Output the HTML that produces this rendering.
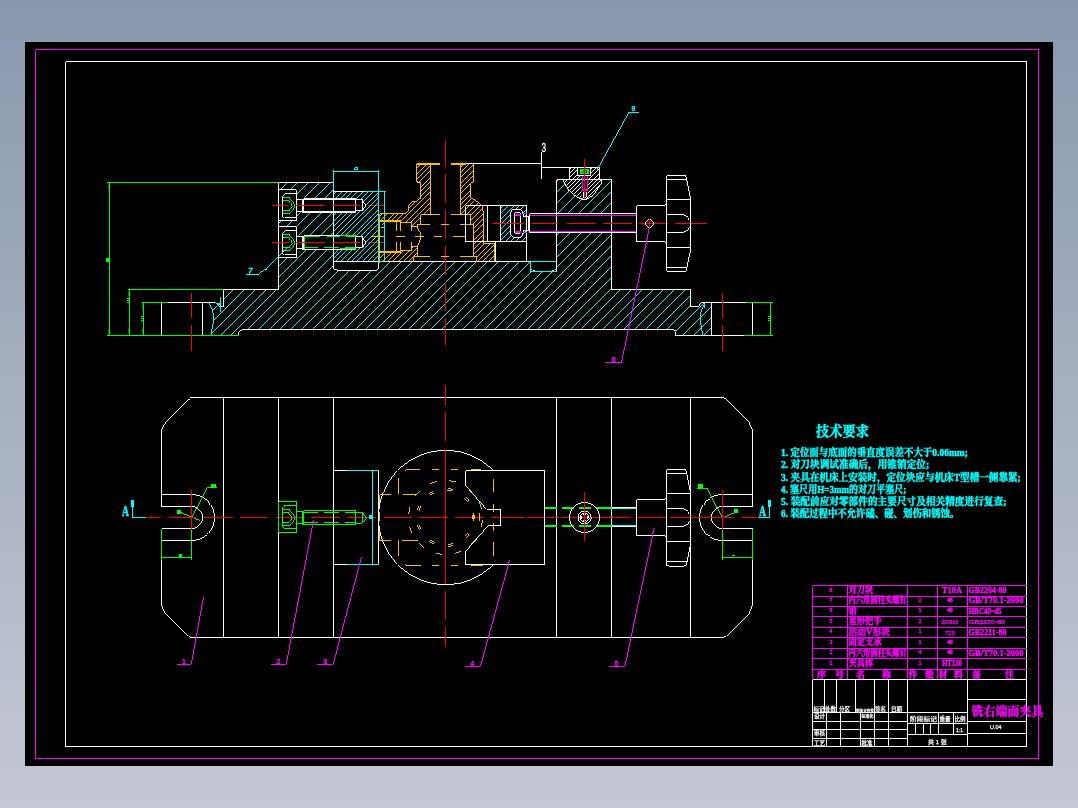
<!DOCTYPE html>
<html lang="zh"><head><meta charset="utf-8"><title>铣右端面夹具</title>
<style>
html,body{margin:0;padding:0}
body{width:1078px;height:808px;overflow:hidden;background:linear-gradient(180deg,#8998ae 0%,#c4c8d3 100%);}
svg{display:block;position:absolute;left:0;top:0;will-change:transform}
</style></head><body>
<svg width="1078" height="808" viewBox="0 0 1078 808" fill="none" stroke-width="0.99" shape-rendering="crispEdges">
<defs><clipPath id="h1"><path d="M278.5 182.5L333.5 182.5L333.5 266.5L334.5 269L337.5 270.5L374.5 270.5L377.5 269L378.5 266.5L378.5 261.5L530.5 261.5L530.5 271.5L556.5 271.5L556.5 179.5L611.5 179.5L611.5 289.5L690.5 289.5L690.5 306.5L697.5 306.5L700.5 302.5L711.5 302.5L711.5 335.5L675.5 335.5L675.5 331.5L672.5 329.5L241.5 329.5L238.5 331.5L238.5 335.5L211 335.5L212.8 325.8L213.9 318L212.3 310.7L209.5 302.5L214.5 302.5L218.5 306.5L223.5 306.5L223.5 289.5L278.5 289.5ZM278.5 189.5L296.5 189.5L296.5 198.5L333.5 198.5L333.5 212.5L296.5 212.5L296.5 220.5L278.5 220.5ZM278.5 226.5L296.5 226.5L296.5 235.5L333.5 235.5L333.5 249.5L296.5 249.5L296.5 257.5L278.5 257.5ZM563 179.5L569.6 190.7L576 196.5L584.5 199.6L592 197L597.8 188.3L601.4 183L601.4 179.5ZM556.5 213.5L611.5 213.5L611.5 232.5L556.5 232.5Z" clip-rule="evenodd"/></clipPath><clipPath id="h2"><path d="M333.5 191.5L378.5 191.5L378.5 261.5L333.5 261.5ZM333.5 198.5L355.5 198.5L355.5 200L362.5 200L366 205.5L362.5 211L355.5 211L355.5 212.5L333.5 212.5ZM333.5 235.5L355.5 235.5L355.5 237L362.5 237L366 242.5L362.5 248L355.5 248L355.5 249.5L333.5 249.5Z" clip-rule="evenodd"/></clipPath><clipPath id="h3"><path d="M430.5 163.5L418.5 163.5L416.5 165.5L416.5 180L418.5 182.5L420.5 182.5L420.5 198L416 201.5L412 201L409.5 203.5L408.5 207.5L408.5 210L405.5 213.5L379.5 213.5L379.5 221L400.5 221L400.5 222.5L411.5 222.5L411.5 226.5L417.5 226.5L417.5 224.5L420.5 224.5L420.5 214.5L430.5 214.5Z" clip-rule="evenodd"/></clipPath><clipPath id="h4"><path d="M379.5 252L400.5 252L400.5 250.5L411.5 250.5L411.5 246.5L417.5 246.5L417.5 256.5L413.5 256.5L413.5 261.5L379.5 261.5Z" clip-rule="evenodd"/></clipPath><clipPath id="h5"><path d="M460.5 163.5L471.5 163.5L473.5 165.5L473.5 180L471.5 182.5L470.5 182.5L470.5 198L479.5 203.7L482 206L483 210.5L483 243L494.5 243L494.5 261.5L476.5 261.5L476.5 256.5L473.5 256.5L473.5 224.5L470.5 224.5L470.5 214.5L460.5 214.5Z" clip-rule="evenodd"/></clipPath><clipPath id="h6"><path d="M500.5 205.5L526.5 205.5L526.5 241.5L500.5 241.5ZM510.5 214L512 210.5L515.5 209L518 209L521.5 210.5L523 214L523 216.5L526.5 216.5L526.5 230.5L523 230.5L523 233L521.5 236L518 237.5L515.5 237.5L512 236L510.5 233Z" clip-rule="evenodd"/></clipPath><clipPath id="h7"><path d="M569.5 167.5L599.5 167.5L599.5 179.5L601.4 179.5L601.4 183L597.8 188.3L592 197L584.5 199.6L576 196.5L569.6 190.7L563 179.5L569.5 179.5ZM577.5 167.5L590.5 167.5L590.5 175.5L587.5 175.5L587.5 196L581.5 196L581.5 175.5L577.5 175.5Z" clip-rule="evenodd"/></clipPath></defs>
<rect x="25" y="42" width="1028" height="724" style="fill:#000;stroke:none"/>
<path d="M35.5 49.5H1038.5V758.5H35.5Z" stroke="#f0f" fill="none"/>
<path d="M65.5 61.5H1026.5V746.5H65.5Z" stroke="#fff" fill="none"/>
<path d="M208.5 185.95L712.5 -318.05M208.5 196.7L712.5 -307.3M208.5 207.45L712.5 -296.55M208.5 218.2L712.5 -285.8M208.5 228.95L712.5 -275.05M208.5 239.7L712.5 -264.3M208.5 250.45L712.5 -253.55M208.5 261.2L712.5 -242.8M208.5 271.95L712.5 -232.05M208.5 282.7L712.5 -221.3M208.5 293.45L712.5 -210.55M208.5 304.2L712.5 -199.8M208.5 314.95L712.5 -189.05M208.5 325.7L712.5 -178.3M208.5 336.45L712.5 -167.55M208.5 347.2L712.5 -156.8M208.5 357.95L712.5 -146.05M208.5 368.7L712.5 -135.3M208.5 379.45L712.5 -124.55M208.5 390.2L712.5 -113.8M208.5 400.95L712.5 -103.05M208.5 411.7L712.5 -92.3M208.5 422.45L712.5 -81.55M208.5 433.2L712.5 -70.8M208.5 443.95L712.5 -60.05M208.5 454.7L712.5 -49.3M208.5 465.45L712.5 -38.55M208.5 476.2L712.5 -27.8M208.5 486.95L712.5 -17.05M208.5 497.7L712.5 -6.3M208.5 508.45L712.5 4.45M208.5 519.2L712.5 15.2M208.5 529.95L712.5 25.95M208.5 540.7L712.5 36.7M208.5 551.45L712.5 47.45M208.5 562.2L712.5 58.2M208.5 572.95L712.5 68.95M208.5 583.7L712.5 79.7M208.5 594.45L712.5 90.45M208.5 605.2L712.5 101.2M208.5 615.95L712.5 111.95M208.5 626.7L712.5 122.7M208.5 637.45L712.5 133.45M208.5 648.2L712.5 144.2M208.5 658.95L712.5 154.95M208.5 669.7L712.5 165.7M208.5 680.45L712.5 176.45M208.5 691.2L712.5 187.2M208.5 701.95L712.5 197.95M208.5 712.7L712.5 208.7M208.5 723.45L712.5 219.45M208.5 734.2L712.5 230.2M208.5 744.95L712.5 240.95M208.5 755.7L712.5 251.7M208.5 766.45L712.5 262.45M208.5 777.2L712.5 273.2M208.5 787.95L712.5 283.95M208.5 798.7L712.5 294.7M208.5 809.45L712.5 305.45M208.5 820.2L712.5 316.2M208.5 830.95L712.5 326.95" stroke="#0ff" stroke-width="0.99" clip-path="url(#h1)"/>
<path d="M278.5 289.5L278.5 182.5L333.5 182.5L333.5 266.5" stroke="#fff" fill="none"/>
<path d="M333.5 266.5Q333.5 270.5 337.5 270.5H374.5Q378.5 270.5 378.5 266.5V261.5" stroke="#fff" fill="none"/>
<path d="M333.5 261.5L530.5 261.5" stroke="#fff"/>
<path d="M530.5 261.5L530.5 271.5L556.5 271.5L556.5 261.5" stroke="#0ff" fill="none"/>
<path d="M530.5 261.5L556.5 261.5" stroke="#0ff"/>
<path d="M531.5 268.5Q532 270.5 535 270.5M552 270.5Q555 270.5 555.5 268.5" stroke="#fff" fill="none"/>
<path d="M556.5 271.5L556.5 179.5L611.5 179.5L611.5 289.5L690.5 289.5L690.5 306.5L697.5 306.5L700.5 302.5L746 302.5" stroke="#fff" fill="none"/>
<path d="M711.5 302.5L711.5 335.5" stroke="#fff" fill="none"/>
<path d="M752.5 302.5L752.5 335.5" stroke="#fff" fill="none"/>
<path d="M744 335.5L675.5 335.5L675.5 331.5L672.5 329.5L241.5 329.5L238.5 331.5L238.5 335.5" stroke="#fff" fill="none"/>
<path d="M278.5 289.5L223.5 289.5L223.5 306.5L218.5 306.5" stroke="#fff" fill="none"/>
<path d="M167.5 302.5L214.5 302.5" stroke="#fff"/>
<path d="M161.5 302.5L161.5 335.5" stroke="#fff"/>
<path d="M202.5 302.5L202.5 335.5" stroke="#fff"/>
<path d="M209.5 302.5Q212 308 213 313T213.5 321T211 335" stroke="#0ff" fill="none"/>
<path d="M214.5 302.5L218.5 306" stroke="#0ff" fill="none"/>
<path d="M220.5 296.5L220.5 312" stroke="#0ff"/>
<path d="M217 303.5h3M217.5 304.5h2.5" stroke="#0ff" fill="none"/>
<path d="M704.5 302.5Q700 310 700.3 318T703 335.5" stroke="#0ff" fill="none"/>
<path d="M704.5 302.5L704.5 308" stroke="#0ff"/>
<path d="M107 182.5L278.5 182.5" stroke="#0f0"/>
<path d="M109.5 182.5L109.5 335.5" stroke="#0f0"/>
<path d="M107 335.5L238.5 335.5" stroke="#0f0"/>
<rect x="106" y="258" width="4" height="4" style="fill:#0f0;stroke:none"/>
<path d="M128 289.5L223.5 289.5" stroke="#0f0"/>
<path d="M129.5 289.5L129.5 335.5" stroke="#0f0"/>
<path d="M141.5 302.5L167.5 302.5" stroke="#0f0"/>
<path d="M143.5 302.5L143.5 335.5" stroke="#0f0"/>
<path d="M126.5 298.5h2.5M127 300.5h3M126.5 302.5h3" stroke="#0f0" fill="none"/>
<path d="M140.5 316.5h2.5M141 318.5h3M140.5 320.5h3" stroke="#0f0" fill="none"/>
<path d="M108.5 184.5v4M108.5 329.5v4M128.5 291.5v4M128.5 329v4M142.5 304.5v4M142.5 329v4" stroke="#070" fill="none"/>
<path d="M746 302.5L772.5 302.5" stroke="#0f0"/>
<path d="M744 335.5L772.5 335.5" stroke="#0f0"/>
<path d="M770.5 302.5L770.5 335.5" stroke="#0f0"/>
<path d="M767.5 316.5h2.5M768 318.5h3M767.5 320.5h3" stroke="#0f0" fill="none"/>
<path d="M191.5 293L191.5 318" stroke="#f00"/>
<path d="M191.5 325L191.5 350.5" stroke="#f00"/>
<path d="M722.5 293L722.5 317.6" stroke="#f00"/>
<path d="M722.5 325L722.5 351" stroke="#f00"/>
<path d="M445.5 140L445.5 166.8" stroke="#f00"/>
<path d="M445.5 174.3L445.5 203" stroke="#f00"/>
<path d="M445.5 210L445.5 238.3" stroke="#f00"/>
<path d="M445.5 246L445.5 274.5" stroke="#f00"/>
<path d="M445.5 281.5L445.5 309.5" stroke="#f00"/>
<path d="M445.5 318L445.5 344.6" stroke="#f00"/>
<path d="M278.5 189.5H294.5Q296.5 189.5 296.5 191.5V220.5H278.5" stroke="#fff" fill="none"/>
<path d="M296.5 193.5H284.5L282.5 195.5V215.5L284.5 217.5H296.5" stroke="#fff" fill="none"/>
<path d="M282.5 197.5H289.5Q293 200.5 294.5 205.5Q293 210.5 289.5 213.5H282.5" stroke="#0f0" fill="none"/>
<path d="M282.5 200.5H289Q291 202.5 292 205.5Q291 208.5 289 210.5H282.5" stroke="#0f0" fill="none"/>
<path d="M296.5 199.5H302.5M296.5 211.5H302.5M302.5 198.5V212.5" stroke="#fff" fill="none"/>
<path d="M303.5 198.5H355.5V212.5H303.5Z" stroke="#fff" fill="none"/>
<path d="M303.5 199.5H355.5M303.5 211.5H355.5" stroke="#fff" fill="none"/>
<path d="M355.5 199.5H362.5L366 205.0L362.5 210.5H355.5" stroke="#fff" fill="none"/>
<path d="M362.5 199.5L362.5 210.5" stroke="#fff"/>
<path d="M272 205.5L288.6 205.5" stroke="#f00"/>
<path d="M296 205.5L324.8 205.5" stroke="#f00"/>
<path d="M332 205.5L360 205.5" stroke="#f00"/>
<path d="M368.3 205.5L384 205.5" stroke="#f00"/>
<path d="M278.5 226.5H294.5Q296.5 226.5 296.5 228.5V257.5H278.5" stroke="#fff" fill="none"/>
<path d="M296.5 230.5H284.5L282.5 232.5V252.5L284.5 254.5H296.5" stroke="#fff" fill="none"/>
<path d="M282.5 234.5H289.5Q293 237.5 294.5 242.5Q293 247.5 289.5 250.5H282.5" stroke="#0f0" fill="none"/>
<path d="M282.5 237.5H289Q291 239.5 292 242.5Q291 245.5 289 247.5H282.5" stroke="#0f0" fill="none"/>
<path d="M296.5 236.5H302.5M296.5 248.5H302.5M302.5 235.5V249.5" stroke="#fff" fill="none"/>
<path d="M303.5 235.5H355.5V249.5H303.5Z" stroke="#fff" fill="none"/>
<path d="M303.5 236.5H320M327 236.5H340M346 236.5H355.5M303.5 247.5H318M324 247.5H339M345 247.5H355.5" stroke="#0f0" fill="none"/>
<path d="M340 235.5H355.5M340 248.5H355.5" stroke="#0f0" fill="none"/>
<path d="M304.5 236.5L304.5 248.5" stroke="#0f0"/>
<path d="M355.5 236.5H362.5L366 242.0L362.5 247.5H355.5" stroke="#fff" fill="none"/>
<path d="M362.5 236.5L362.5 247.5" stroke="#fff"/>
<path d="M272 242.5L288.6 242.5" stroke="#f00"/>
<path d="M296 242.5L324.8 242.5" stroke="#f00"/>
<path d="M332 242.5L360 242.5" stroke="#f00"/>
<path d="M368.3 242.5L384 242.5" stroke="#f00"/>
<path d="M332.5 195.7L379.5 148.7M332.5 201L379.5 154M332.5 206.3L379.5 159.3M332.5 211.6L379.5 164.6M332.5 216.9L379.5 169.9M332.5 222.2L379.5 175.2M332.5 227.5L379.5 180.5M332.5 232.8L379.5 185.8M332.5 238.1L379.5 191.1M332.5 243.4L379.5 196.4M332.5 248.7L379.5 201.7M332.5 254L379.5 207M332.5 259.3L379.5 212.3M332.5 264.6L379.5 217.6M332.5 269.9L379.5 222.9M332.5 275.2L379.5 228.2M332.5 280.5L379.5 233.5M332.5 285.8L379.5 238.8M332.5 291.1L379.5 244.1M332.5 296.4L379.5 249.4M332.5 301.7L379.5 254.7M332.5 307L379.5 260" stroke="#0ff" stroke-width="0.99" clip-path="url(#h2)"/>
<path d="M333.5 191.5L365 191.5" stroke="#fff"/>
<path d="M378.5 191.5L378.5 261.5" stroke="#fff"/>
<path d="M333.5 170L333.5 190" stroke="#0ff"/>
<path d="M378.5 170L378.5 261.5" stroke="#0ff"/>
<path d="M333.5 171.5L378.5 171.5" stroke="#0ff"/>
<path d="M354.5 167.5h3v2h-3zM336.5 171.5h3M372.5 171.5h3" stroke="#0ff" fill="none"/>
<path d="M365 191.5L385.5 191.5" stroke="#0ff"/>
<path d="M378.5 261.5L385.5 261.5" stroke="#0ff"/>
<path d="M384.5 191.5L384.5 261.5" stroke="#0ff"/>
<path d="M381.5 224.5q2 -2 3 0t-1 3q-2 1 -2 -1" stroke="#0ff" fill="none"/>
<path d="M378.5 169.7L431.5 116.7M378.5 175L431.5 122M378.5 180.3L431.5 127.3M378.5 185.6L431.5 132.6M378.5 190.9L431.5 137.9M378.5 196.2L431.5 143.2M378.5 201.5L431.5 148.5M378.5 206.8L431.5 153.8M378.5 212.1L431.5 159.1M378.5 217.4L431.5 164.4M378.5 222.7L431.5 169.7M378.5 228L431.5 175M378.5 233.3L431.5 180.3M378.5 238.6L431.5 185.6M378.5 243.9L431.5 190.9M378.5 249.2L431.5 196.2M378.5 254.5L431.5 201.5M378.5 259.8L431.5 206.8M378.5 265.1L431.5 212.1M378.5 270.4L431.5 217.4M378.5 275.7L431.5 222.7" stroke="#ffbf00" stroke-width="0.99" clip-path="url(#h3)"/>
<path d="M378.5 249.2L418.5 209.2M378.5 254.5L418.5 214.5M378.5 259.8L418.5 219.8M378.5 265.1L418.5 225.1M378.5 270.4L418.5 230.4M378.5 275.7L418.5 235.7M378.5 281L418.5 241M378.5 286.3L418.5 246.3M378.5 291.6L418.5 251.6M378.5 296.9L418.5 256.9" stroke="#ffbf00" stroke-width="0.99" clip-path="url(#h4)"/>
<path d="M459.5 168.2L495.5 132.2M459.5 173.5L495.5 137.5M459.5 178.8L495.5 142.8M459.5 184.1L495.5 148.1M459.5 189.4L495.5 153.4M459.5 194.7L495.5 158.7M459.5 200L495.5 164M459.5 205.3L495.5 169.3M459.5 210.6L495.5 174.6M459.5 215.9L495.5 179.9M459.5 221.2L495.5 185.2M459.5 226.5L495.5 190.5M459.5 231.8L495.5 195.8M459.5 237.1L495.5 201.1M459.5 242.4L495.5 206.4M459.5 247.7L495.5 211.7M459.5 253L495.5 217M459.5 258.3L495.5 222.3M459.5 263.6L495.5 227.6M459.5 268.9L495.5 232.9M459.5 274.2L495.5 238.2M459.5 279.5L495.5 243.5M459.5 284.8L495.5 248.8M459.5 290.1L495.5 254.1M459.5 295.4L495.5 259.4" stroke="#ffbf00" stroke-width="0.99" clip-path="url(#h5)"/>
<path d="M440 163.5H418.5Q416.5 163.5 416.5 165.5V180Q416.5 182.5 419 182.5H420.5V198L416 201.5Q412 200.5 409.5 203.5T408.5 207.5V210L405.5 213.5H379.5" stroke="#ffbf00" fill="none"/>
<path d="M416.5 164L440 164" stroke="#ffbf00" stroke-width="2"/>
<path d="M451 164L466 164" stroke="#ffbf00" stroke-width="2"/>
<path d="M430.5 163.5L430.5 214.5" stroke="#ffbf00"/>
<path d="M460.5 163.5L460.5 214.5" stroke="#ffbf00"/>
<path d="M466 163.5H471.5Q473.5 163.5 473.5 165.5V180Q473.5 182.5 471 182.5H470.5V198L479.5 203.7Q483 206 483 210.5V243H494.5" stroke="#ffbf00" fill="none"/>
<path d="M417 182.5L420.5 182.5" stroke="#ffbf00"/>
<path d="M470.5 182.5L473 182.5" stroke="#ffbf00"/>
<path d="M420.5 214.5H440M451 214.5H470.5M420.5 214.5V224.5M470.5 214.5V224.5" stroke="#ffbf00" fill="none"/>
<path d="M416.5 224.5H430M441 224.5H449M460 224.5H473.5" stroke="#ffbf00" fill="none"/>
<path d="M473.5 224.5V256.5M417.5 224.5V227.5M417.5 246.5V256.5" stroke="#ffbf00" fill="none"/>
<path d="M417.5 227.5Q421 232 420.5 236.5T417.5 246.5" stroke="#ffbf00" fill="none"/>
<path d="M413.5 256.5H430M441 256.5H449M460 256.5H476.5M413.5 256.5V261.5M476.5 256.5V261.5" stroke="#ffbf00" fill="none"/>
<path d="M372 236.5H383.5M396 236.5H404.5M415 236.5H423.5M434 236.5H442M453 236.5H465" stroke="#ffbf00" fill="none"/>
<path d="M379.5 221L400.5 221" stroke="#ffbf00" stroke-width="2"/>
<path d="M379.5 252L400.5 252" stroke="#ffbf00" stroke-width="2"/>
<path d="M400.5 222.5L411.5 222.5" stroke="#ffbf00"/>
<path d="M400.5 250.5L411.5 250.5" stroke="#ffbf00"/>
<path d="M396.5 221V230.5M396.5 242V252M400.5 221V230.5M400.5 242V252M411.5 222V230.5M411.5 242V250.5" stroke="#ffbf00" fill="none"/>
<path d="M411.5 226.5H417.5M411.5 246.5H417.5" stroke="#ffbf00" fill="none"/>
<path d="M379.5 213.5L379.5 261.5" stroke="#ffbf00"/>
<path d="M466 163.5L541.5 163.5" stroke="#fff"/>
<path d="M499.5 209.3L527.5 181.3M499.5 214.7L527.5 186.7M499.5 220.1L527.5 192.1M499.5 225.5L527.5 197.5M499.5 230.9L527.5 202.9M499.5 236.3L527.5 208.3M499.5 241.7L527.5 213.7M499.5 247.1L527.5 219.1M499.5 252.5L527.5 224.5M499.5 257.9L527.5 229.9M499.5 263.3L527.5 235.3" stroke="#0ff" stroke-width="0.99" clip-path="url(#h6)"/>
<path d="M465.5 205.5H526.5V241.5H465.5Z" stroke="#fff" fill="none"/>
<path d="M487.5 205.5L487.5 241.5" stroke="#fff"/>
<path d="M500.5 205.5L500.5 241.5" stroke="#fff"/>
<path d="M495.5 241.5H526.5V261.5H495.5Z" stroke="#fff" fill="none"/>
<path d="M494.5 243.5L494.5 261.5" stroke="#ffbf00"/>
<path d="M528.5 216.5H523V214Q523 209 518 209H515.5Q510.5 209 510.5 214V233Q510.5 237.5 515.5 237.5H518Q523 237.5 523 233V230.5H528.5" stroke="#fff" fill="none"/>
<path d="M514.5 214V232M520.5 214V232M514.5 214Q514.5 212.5 516 212.5H519Q520.5 212.5 520.5 214M514.5 232Q514.5 233.5 516 233.5H519Q520.5 233.5 520.5 232" stroke="#fff" fill="none"/>
<path d="M514.5 215L520.5 215" stroke="#f0f" stroke-width="2"/>
<path d="M514.5 232L520.5 232" stroke="#f0f" stroke-width="2"/>
<path d="M523 213.5L526.5 213.5" stroke="#f0f"/>
<path d="M523 232.5L526.5 232.5" stroke="#f0f"/>
<path d="M528.5 216.5L528.5 230.5" stroke="#fff"/>
<path d="M529.5 213.5L529.5 232.5" stroke="#fff"/>
<path d="M529.5 213.5L636.5 213.5" stroke="#fff"/>
<path d="M529.5 232.5L636.5 232.5" stroke="#fff"/>
<path d="M529.5 215.5L636.5 215.5" stroke="#f0f"/>
<path d="M529.5 231.5L636.5 231.5" stroke="#f0f"/>
<path d="M492 223.5L524 223.5" stroke="#f00"/>
<path d="M531 223.5L558 223.5" stroke="#f00"/>
<path d="M567 223.5L595.5 223.5" stroke="#f00"/>
<path d="M603 223.5L632 223.5" stroke="#f00"/>
<path d="M639 223.5L667.8 223.5" stroke="#f00"/>
<path d="M675 223.5L707 223.5" stroke="#f00"/>
<path d="M636.5 205.5H663.5L666.5 203M636.5 241.5H663.5L666.5 244M636.5 205.5V241.5" stroke="#fff" fill="none"/>
<path d="M666.5 177.5Q666.5 175.5 668.5 175.5H684Q686 175.5 686.5 177.5L690.5 197.5V249.5L686.5 269.5Q686 271.5 684 271.5H668.5Q666.5 271.5 666.5 269.5Z" stroke="#fff" fill="none"/>
<path d="M666.5 179.5H686.5M666.5 199.5H690.5M666.5 247.5H690.5M666.5 267.5H686.5" stroke="#fff" fill="none"/>
<path d="M666.5 214.5H682Q690.5 216 690.5 223.5T682 232.5H666.5" stroke="#fff" fill="none"/>
<path d="M653.5 223.5L653.36 224.54L652.96 225.5L652.33 226.33L651.5 226.96L650.54 227.36L649.5 227.5L648.46 227.36L647.5 226.96L646.67 226.33L646.04 225.5L645.64 224.54L645.5 223.5L645.64 222.46L646.04 221.5L646.67 220.67L647.5 220.04L648.46 219.64L649.5 219.5L650.54 219.64L651.5 220.04L652.33 220.67L652.96 221.5L653.36 222.46L653.5 223.5Z" stroke="#fff" fill="none"/>
<path d="M649.5 219L649.5 227" stroke="#f00"/>
<path d="M562 168.6L602.4 128.2M562 172.8L602.4 132.4M562 177L602.4 136.6M562 181.2L602.4 140.8M562 185.4L602.4 145M562 189.6L602.4 149.2M562 193.8L602.4 153.4M562 198L602.4 157.6M562 202.2L602.4 161.8M562 206.4L602.4 166M562 210.6L602.4 170.2M562 214.8L602.4 174.4M562 219L602.4 178.6M562 223.2L602.4 182.8M562 227.4L602.4 187M562 231.6L602.4 191.2M562 235.8L602.4 195.4" stroke="#fff" stroke-width="0.99" clip-path="url(#h7)"/>
<path d="M569.5 179.5V167.5H599.5V179.5" stroke="#fff" fill="none"/>
<path d="M563 179.5L569.6 190.7Q576 198 584.5 199.6Q593 198 597.8 188.3L601.5 183V179.5" stroke="#fff" fill="none"/>
<path d="M577.5 167.5V175.5H590.5V167.5" stroke="#fff" fill="none"/>
<rect x="580" y="169" width="9" height="5" style="fill:#0f0;stroke:none"/>
<path d="M582.5 170.5h4v2h-4z" stroke="#060" fill="none"/>
<path d="M582.5 175.5V191M587.5 175.5V191" stroke="#f0f" fill="none"/>
<path d="M582 190L588 190" stroke="#f0f" stroke-width="2"/>
<path d="M583.5 191.5V195.5L584.5 197L586.5 195.5V191.5" stroke="#fff" fill="none"/>
<path d="M584.5 159L584.5 199" stroke="#f00"/>
<path d="M541.5 167.5L569.5 167.5" stroke="#fff"/>
<path d="M541.5 152L541.5 179" stroke="#fff"/>
<text x="541.6" y="151.6" fill="#fff" font-size="13" font-family='"Liberation Sans","Noto Sans CJK SC",sans-serif' stroke="#fff" stroke-width="0.3" textLength="4.6" lengthAdjust="spacingAndGlyphs">3</text>
<path d="M596.5 170L628.3 112.5L639 112.5" stroke="#0ff" fill="none"/>
<text x="631.5" y="110.5" fill="#0ff" font-size="6.5" font-family='"Liberation Sans","Noto Sans CJK SC",sans-serif' stroke="#0ff" stroke-width="0.5">9</text>
<path d="M246 274.5L258 274.5L264 270L266 269.5L288 247" stroke="#0ff" fill="none"/>
<text x="248" y="273.5" fill="#0ff" font-size="9.5" font-family='"Liberation Sans","Noto Sans CJK SC",sans-serif' stroke="#0ff" stroke-width="0.5" textLength="4.5" lengthAdjust="spacingAndGlyphs" font-style="italic">7</text>
<path d="M605 362.5L621.5 362.5L649.5 227" stroke="#f0f" fill="none"/>
<text x="612" y="361.5" fill="#f0f" font-size="6.5" font-family='"Liberation Sans","Noto Sans CJK SC",sans-serif' stroke="#f0f" stroke-width="0.4">6</text>
<path d="M193 397.5H721Q724 397.5 725.5 399L749 422.5Q752.5 426 752.5 432V506.5" stroke="#fff" fill="none"/>
<path d="M752.5 560V603Q752.5 609 749 612.5L725.5 636Q724 637.5 721 637.5H193Q190 637.5 188.5 636L165 612.5Q161.5 609 161.5 603V559.5" stroke="#fff" fill="none"/>
<path d="M161.5 506.5V432Q161.5 426 165 422.5L188.5 399Q190 397.5 193 397.5" stroke="#fff" fill="none"/>
<path d="M223.5 397.5L223.5 637.5" stroke="#fff"/>
<path d="M278.5 397.5L278.5 637.5" stroke="#fff"/>
<path d="M333.5 397.5L333.5 637.5" stroke="#fff"/>
<path d="M556.5 397.5L556.5 637.5" stroke="#fff"/>
<path d="M611.5 397.5L611.5 637.5" stroke="#fff"/>
<path d="M690.5 397.5L690.5 637.5" stroke="#fff"/>
<path d="M161.5 494.5L191.5 494.5L193 494.55L194.5 494.7L195.99 494.94L197.45 495.28L198.89 495.72L200.3 496.25L201.67 496.87L203 497.58L204.28 498.38L205.5 499.25L206.66 500.21L207.76 501.24L208.79 502.34L209.75 503.5L210.62 504.72L211.42 506L212.13 507.33L212.75 508.7L213.28 510.11L213.72 511.55L214.06 513.01L214.3 514.5L214.45 516L214.5 517.5L214.45 519L214.3 520.5L214.06 521.99L213.72 523.45L213.28 524.89L212.75 526.3L212.13 527.67L211.42 529L210.62 530.28L209.75 531.5L208.79 532.66L207.76 533.76L206.66 534.79L205.5 535.75L204.28 536.62L203 537.42L201.67 538.13L200.3 538.75L198.89 539.28L197.45 539.72L195.99 540.06L194.5 540.3L193 540.45L191.5 540.5L161.5 540.5" stroke="#fff" fill="none"/>
<path d="M161.5 506.5L191.5 506.5L192.94 506.59L194.35 506.87L195.71 507.34L197 507.97L198.2 508.77L199.28 509.72L200.23 510.8L201.03 512L201.66 513.29L202.13 514.65L202.41 516.06L202.5 517.5L202.41 518.94L202.13 520.35L201.66 521.71L201.03 523L200.23 524.2L199.28 525.28L198.2 526.23L197 527.03L195.71 527.66L194.35 528.13L192.94 528.41L191.5 528.5L161.5 528.5" stroke="#fff" fill="none"/>
<path d="M161.5 494.5L161.5 506.5" stroke="#fff"/>
<path d="M752.5 494.5L722.5 494.5L721 494.55L719.5 494.7L718.01 494.94L716.55 495.28L715.11 495.72L713.7 496.25L712.33 496.87L711 497.58L709.72 498.38L708.5 499.25L707.34 500.21L706.24 501.24L705.21 502.34L704.25 503.5L703.38 504.72L702.58 506L701.87 507.33L701.25 508.7L700.72 510.11L700.28 511.55L699.94 513.01L699.7 514.5L699.55 516L699.5 517.5L699.55 519L699.7 520.5L699.94 521.99L700.28 523.45L700.72 524.89L701.25 526.3L701.87 527.67L702.58 529L703.38 530.28L704.25 531.5L705.21 532.66L706.24 533.76L707.34 534.79L708.5 535.75L709.72 536.62L711 537.42L712.33 538.13L713.7 538.75L715.11 539.28L716.55 539.72L718.01 540.06L719.5 540.3L721 540.45L722.5 540.5L752.5 540.5" stroke="#fff" fill="none"/>
<path d="M752.5 506.5L722.5 506.5L721.06 506.59L719.65 506.87L718.29 507.34L717 507.97L715.8 508.77L714.72 509.72L713.77 510.8L712.97 512L712.34 513.29L711.87 514.65L711.59 516.06L711.5 517.5L711.59 518.94L711.87 520.35L712.34 521.71L712.97 523L713.77 524.2L714.72 525.28L715.8 526.23L717 527.03L718.29 527.66L719.65 528.13L721.06 528.41L722.5 528.5L752.5 528.5" stroke="#fff" fill="none"/>
<path d="M752.5 494.5L752.5 506.5" stroke="#fff"/>
<path d="M161.5 528.5L161.5 559.5" stroke="#0f0"/>
<path d="M191.5 528.5L191.5 559.5" stroke="#0f0"/>
<path d="M161.5 557.5L191.5 557.5" stroke="#0f0"/>
<rect x="179" y="554" width="3" height="3" style="fill:#0f0;stroke:none"/>
<path d="M722.5 528.5L722.5 560" stroke="#0f0"/>
<path d="M752.5 528.5L752.5 560" stroke="#0f0"/>
<path d="M722.5 557.5L752.5 557.5" stroke="#0f0"/>
<path d="M731.5 555.5h3" stroke="#0f0" fill="none"/>
<path d="M191.5 490L191.5 529.5" stroke="#f00"/>
<path d="M722.5 489.5L722.5 530" stroke="#f00"/>
<path d="M191.5 517.5L206.5 487.5L216.5 487.5" stroke="#0f0" fill="none"/>
<rect x="211" y="484" width="5" height="4" style="fill:#0f0;stroke:none"/>
<path d="M179.5 512.5L191.5 517.5L200 521" stroke="#0f0" fill="none"/>
<rect x="177" y="510" width="4" height="4" style="fill:#0f0;stroke:none"/>
<path d="M697 488.5L707.5 488.5L722.5 517.5" stroke="#0f0" fill="none"/>
<rect x="698" y="484" width="5" height="4" style="fill:#0f0;stroke:none"/>
<path d="M722.5 517.5L736 511.5" stroke="#0f0" fill="none"/>
<rect x="734" y="509" width="4" height="4" style="fill:#0f0;stroke:none"/>
<text x="122" y="516" fill="#0ff" font-size="14" font-family='"Liberation Serif","Noto Serif CJK SC",serif' font-weight="bold" stroke="#0ff" stroke-width="0.45" textLength="7" lengthAdjust="spacingAndGlyphs">A</text>
<path d="M132.5 500L132.5 517.5L146 517.5" stroke="#0ff" fill="none"/>
<path d="M132.5 500L132.5 506.5" stroke="#0ff" stroke-width="3"/>
<text x="759" y="516" fill="#0ff" font-size="14" font-family='"Liberation Serif","Noto Serif CJK SC",serif' font-weight="bold" stroke="#0ff" stroke-width="0.45" textLength="7" lengthAdjust="spacingAndGlyphs">A</text>
<path d="M757.5 517.5L769.5 517.5L769.5 500" stroke="#0ff" fill="none"/>
<path d="M769.5 500L769.5 506.5" stroke="#0ff" stroke-width="3"/>
<path d="M146.3 517.5L161.3 517.5" stroke="#f00"/>
<path d="M168.8 517.5L196.3 517.5" stroke="#f00"/>
<path d="M204 517.5L232.5 517.5" stroke="#f00"/>
<path d="M240 517.5L268 517.5" stroke="#f00"/>
<path d="M276 517.5L305 517.5" stroke="#f00"/>
<path d="M311 517.5L340 517.5" stroke="#f00"/>
<path d="M347.5 517.5L376 517.5" stroke="#f00"/>
<path d="M383.9 517.5L411.7 517.5" stroke="#f00"/>
<path d="M418.6 517.5L447.9 517.5" stroke="#f00"/>
<path d="M455 517.5L484.1 517.5" stroke="#f00"/>
<path d="M491 517.5L523.6 517.5" stroke="#f00"/>
<path d="M527.3 517.5L559 517.5" stroke="#f00"/>
<path d="M561.2 517.5L631.3 517.5" stroke="#f00"/>
<path d="M634.7 517.5L665.8 517.5" stroke="#f00"/>
<path d="M670.3 517.5L733.8 517.5" stroke="#f00"/>
<path d="M741.6 517.5L757 517.5" stroke="#f00"/>
<path d="M333.5 470.5H378.5V564.5H333.5Z" stroke="#fff" fill="none"/>
<path d="M347 470.5L378.5 470.5" stroke="#0ff"/>
<path d="M347 564.5L378.5 564.5" stroke="#0ff"/>
<path d="M372.5 470.5L372.5 564.5" stroke="#0ff"/>
<rect x="369" y="515" width="4" height="4" style="fill:#0ff;stroke:none"/>
<path d="M278.5 501.5H296.5V532.5H278.5Z" stroke="#0f0" fill="none"/>
<path d="M296.5 505.5H284L282.5 507V527L284 528.5H296.5" stroke="#0f0" fill="none"/>
<path d="M282.5 509.5H289.5Q293 512 294.5 517.5Q293 523 289.5 525.5H282.5" stroke="#0f0" fill="none"/>
<path d="M282.5 512.5H288.5Q291 514.5 291.5 517.5Q291 520.5 288.5 522.5H282.5" stroke="#0f0" fill="none"/>
<path d="M296.5 511.5H302.5M296.5 523.5H302.5M302.5 510.5V524.5" stroke="#0f0" fill="none"/>
<path d="M303.5 510.5H355.5V524.5H303.5Z" stroke="#0f0" fill="none"/>
<path d="M304 512.5H318M324 512.5H339M345 512.5H355.5M304 522.5H318M324 522.5H339M345 522.5H355.5" stroke="#0f0" fill="none"/>
<path d="M355.5 512H360.5Q364 514 366 517.5Q364 521 360.5 523H355.5" stroke="#0f0" fill="none"/>
<path d="M362.5 512L362.5 523" stroke="#0f0"/>
<path d="M493.25 470.5L492.18 469.44L491.1 468.41L489.98 467.4L488.85 466.41L487.69 465.46L486.52 464.52L485.32 463.62L484.1 462.74L482.87 461.89L481.61 461.06L480.34 460.27L479.05 459.5L477.74 458.77L476.41 458.06L475.08 457.38L473.72 456.73L472.35 456.12L470.97 455.53L469.57 454.97L468.17 454.45L466.75 453.96L465.32 453.5L463.88 453.07L462.43 452.68L460.98 452.31L459.51 451.98L458.04 451.68L456.56 451.42L455.08 451.19L453.59 450.99L452.1 450.83L450.6 450.69L449.1 450.6L447.6 450.53L446.1 450.5L444.6 450.51L443.1 450.54L441.6 450.61L440.1 450.72L438.61 450.86L437.12 451.03L435.63 451.23L434.15 451.47L432.67 451.74L431.2 452.04L429.74 452.38L428.28 452.75L426.84 453.15L425.4 453.59L423.97 454.05L422.56 454.55L421.15 455.08L419.76 455.64L418.38 456.23L417.01 456.86L415.66 457.51L414.32 458.19L413 458.91L411.7 459.65L410.41 460.42L409.14 461.22L407.89 462.05L406.66 462.91L405.44 463.79L404.25 464.7L403.08 465.64L401.93 466.61L400.8 467.59L399.69 468.61L398.61 469.65L397.54 470.71L396.51 471.8L395.5 472.91L394.51 474.04L393.55 475.19L392.61 476.37L391.71 477.56L390.82 478.78L389.97 480.01L389.14 481.26L388.35 482.54L387.58 483.83L386.84 485.13L386.13 486.45L385.45 487.79L384.8 489.15L384.18 490.51L383.59 491.89L383.03 493.29L382.5 494.69L382.01 496.11L381.54 497.54L381.11 498.98L380.71 500.42L380.35 501.88L380.01 503.34L379.71 504.82L379.44 506.29L379.21 507.78L379.01 509.26L378.84 510.76L378.71 512.25L378.61 513.75L378.54 515.25L378.5 516.75L378.5 518.25L378.54 519.75L378.61 521.25L378.71 522.75L378.84 524.24L379.01 525.74L379.21 527.22L379.44 528.71L379.71 530.18L380.01 531.66L380.35 533.12L380.71 534.58L381.11 536.02L381.54 537.46L382.01 538.89L382.5 540.31L383.03 541.71L383.59 543.11L384.18 544.49L384.8 545.85L385.45 547.21L386.13 548.55L386.84 549.87L387.58 551.17L388.35 552.46L389.14 553.74L389.97 554.99L390.82 556.22L391.71 557.44L392.61 558.63L393.55 559.81L394.51 560.96L395.5 562.09L396.51 563.2L397.54 564.29L398.61 565.35L399.69 566.39L400.8 567.41L401.93 568.39L403.08 569.36L404.25 570.3L405.44 571.21L406.66 572.09L407.89 572.95L409.14 573.78L410.41 574.58L411.7 575.35L413 576.09L414.32 576.81L415.66 577.49L417.01 578.14L418.38 578.77L419.76 579.36L421.15 579.92L422.56 580.45L423.97 580.95L425.4 581.41L426.84 581.85L428.28 582.25L429.74 582.62L431.2 582.96L432.67 583.26L434.15 583.53L435.63 583.77L437.12 583.97L438.61 584.14L440.1 584.28L441.6 584.39L443.1 584.46L444.6 584.49L446.1 584.5L447.6 584.47L449.1 584.4L450.6 584.31L452.1 584.17L453.59 584.01L455.08 583.81L456.56 583.58L458.04 583.32L459.51 583.02L460.98 582.69L462.43 582.32L463.88 581.93L465.32 581.5L466.75 581.04L468.17 580.55L469.57 580.03L470.97 579.47L472.35 578.88L473.72 578.27L475.08 577.62L476.41 576.94L477.74 576.23L479.05 575.5L480.34 574.73L481.61 573.94L482.87 573.11L484.1 572.26L485.32 571.38L486.52 570.48L487.69 569.54L488.85 568.59L489.98 567.6L491.1 566.59L492.18 565.56L493.25 564.5" stroke="#fff" fill="none"/>
<path d="M465.5 470.5H544.5V564.5H465.5V550.5L487.5 525.5H500.5V509.5H487.5L465.5 484.5Z" stroke="#fff" fill="none"/>
<path d="M398.5 494V478M405 470.5Q406 469.5 408 469.5H420M432 469.5H438.5M451 469.5H457.5M470.5 469.5H481M493.5 478.5V492M493.5 504V512M493.5 522.5V530.5M493.5 542V555.5M483 565.5H470.5M457.5 565.5H451M438.5 565.5H432M420.5 565.5H408Q406 565.5 405 564.5M398.5 555.5V540" stroke="#ffbf00" fill="none"/>
<path d="M379.5 494.5H390.5M403 494.5H417M379.5 540.5H390.5M402 540.5H417.5" stroke="#ffbf00" fill="none"/>
<path d="M379.5 494.5V502.5M379.5 512V521M379.5 532V540.5" stroke="#ffbf00" fill="none"/>
<circle cx="445.5" cy="517.5" r="37" stroke="#ffbf00" fill="none" stroke-dasharray="7 12.37" stroke-dashoffset="-3"/>
<circle cx="445.5" cy="517.5" r="29" stroke="#ffbf00" fill="none" stroke-dasharray="5 15.25" stroke-dashoffset="3"/>
<circle cx="445.5" cy="517.5" r="27.2" stroke="#ffbf00" fill="none" stroke-dasharray="5 13.99" stroke-dashoffset="3"/>
<path d="M479.5 513V521M473.5 512.5V521" stroke="#ffbf00" fill="none"/>
<path d="M445.5 385L445.5 405" stroke="#f00"/>
<path d="M445.5 412L445.5 440.7" stroke="#f00"/>
<path d="M445.5 448.5L445.5 584" stroke="#f00"/>
<path d="M445.5 591L445.5 619.5" stroke="#f00"/>
<path d="M445.5 627L445.5 647" stroke="#f00"/>
<path d="M544.5 508H557M562 508H574M579 508H591M596 508H611.5M544.5 526H557M562 526H574M579 526H591M596 526H611.5" stroke="#0f0" fill="none" stroke-width="2"/>
<path d="M611.5 507.5L636.5 507.5" stroke="#fff"/>
<path d="M611.5 526.5L636.5 526.5" stroke="#fff"/>
<path d="M611.5 508.5L636.5 508.5" stroke="#0ff"/>
<path d="M611.5 525.5L636.5 525.5" stroke="#0ff"/>
<path d="M599.5 517.5L599.42 519.02L599.19 520.52L598.81 521.99L598.28 523.42L597.62 524.78L596.81 526.07L595.88 527.27L594.83 528.37L593.68 529.36L592.43 530.23L591.11 530.97L589.71 531.57L588.26 532.02L586.77 532.33L585.26 532.48L583.74 532.48L582.23 532.33L580.74 532.02L579.29 531.57L577.89 530.97L576.57 530.23L575.32 529.36L574.17 528.37L573.12 527.27L572.19 526.07L571.38 524.78L570.72 523.42L570.19 521.99L569.81 520.52L569.58 519.02L569.5 517.5L569.58 515.98L569.81 514.48L570.19 513.01L570.72 511.58L571.38 510.22L572.19 508.93L573.12 507.73L574.17 506.63L575.32 505.64L576.57 504.77L577.89 504.03L579.29 503.43L580.74 502.98L582.23 502.67L583.74 502.52L585.26 502.52L586.77 502.67L588.26 502.98L589.71 503.43L591.11 504.03L592.43 504.77L593.68 505.64L594.83 506.63L595.88 507.73L596.81 508.93L597.62 510.22L598.28 511.58L598.81 513.01L599.19 514.48L599.42 515.98L599.5 517.5Z" stroke="#fff" fill="none"/>
<path d="M591 517.5L590.82 519L590.31 520.42L589.48 521.68L588.38 522.71L587.07 523.47L585.63 523.9L584.12 523.99L582.64 523.73L581.25 523.13L580.04 522.23L579.07 521.07L578.39 519.72L578.04 518.25L578.04 516.75L578.39 515.28L579.07 513.93L580.04 512.77L581.25 511.87L582.64 511.27L584.12 511.01L585.63 511.1L587.07 511.53L588.38 512.29L589.48 513.32L590.31 514.58L590.82 516L591 517.5Z" stroke="#fff" fill="none"/>
<path d="M589 517.5L588.85 518.66L588.4 519.75L587.68 520.68L586.75 521.4L585.66 521.85L584.5 522L583.34 521.85L582.25 521.4L581.32 520.68L580.6 519.75L580.15 518.66L580 517.5L580.15 516.34L580.6 515.25L581.32 514.32L582.25 513.6L583.34 513.15L584.5 513L585.66 513.15L586.75 513.6L587.68 514.32L588.4 515.25L588.85 516.34L589 517.5Z" stroke="#fff" fill="none"/>
<path d="M587.3 517.5L587.2 518.22L586.92 518.9L586.48 519.48L585.9 519.92L585.22 520.2L584.5 520.3L583.78 520.2L583.1 519.92L582.52 519.48L582.08 518.9L581.8 518.22L581.7 517.5L581.8 516.78L582.08 516.1L582.52 515.52L583.1 515.08L583.78 514.8L584.5 514.7L585.22 514.8L585.9 515.08L586.48 515.52L586.92 516.1L587.2 516.78L587.3 517.5Z" stroke="#fff" fill="none"/>
<path d="M584.5 491.5L584.5 540.5" stroke="#f00"/>
<path d="M636.5 499.5H663.5L666.5 497M636.5 535.5H663.5L666.5 538M636.5 499.5V535.5" stroke="#fff" fill="none"/>
<path d="M666.5 471.5Q666.5 469.5 668.5 469.5H684Q686 469.5 686.5 471.5L690.5 491.5V544L686.5 564Q686 566 684 566H668.5Q666.5 566 666.5 564Z" stroke="#fff" fill="none"/>
<path d="M666.5 473.5H686.5M666.5 493.5H690.5M666.5 541.5H690.5M666.5 561.5H686.5" stroke="#fff" fill="none"/>
<path d="M666.5 508.5H682Q690.5 510 690.5 517.5T682 526.5H666.5" stroke="#fff" fill="none"/>
<path d="M203.5 597L191.5 663L190 664.5L176.5 664.5" stroke="#f0f" fill="none"/>
<text x="184" y="663.5" fill="#f0f" font-size="7" font-family='"Liberation Sans","Noto Sans CJK SC",sans-serif' text-anchor="middle" stroke="#f0f" stroke-width="0.4">1</text>
<path d="M313.5 520L286.5 663L285 664.5L270.5 664.5" stroke="#f0f" fill="none"/>
<text x="278.5" y="663.5" fill="#f0f" font-size="7" font-family='"Liberation Sans","Noto Sans CJK SC",sans-serif' text-anchor="middle" stroke="#f0f" stroke-width="0.4">2</text>
<path d="M361.5 557L333.5 663L332 664.5L317 664.5" stroke="#f0f" fill="none"/>
<text x="325.25" y="663.5" fill="#f0f" font-size="7" font-family='"Liberation Sans","Noto Sans CJK SC",sans-serif' text-anchor="middle" stroke="#f0f" stroke-width="0.4">3</text>
<path d="M509.5 559.5L480.5 665L479 666.5L464.5 666.5" stroke="#f0f" fill="none"/>
<text x="472.5" y="665.5" fill="#f0f" font-size="7" font-family='"Liberation Sans","Noto Sans CJK SC",sans-serif' text-anchor="middle" stroke="#f0f" stroke-width="0.4">4</text>
<path d="M654 527.5L625 665L623.5 666.5L608.5 666.5" stroke="#f0f" fill="none"/>
<text x="616.75" y="665.5" fill="#f0f" font-size="7" font-family='"Liberation Sans","Noto Sans CJK SC",sans-serif' text-anchor="middle" stroke="#f0f" stroke-width="0.4">5</text>
<text x="816" y="435.5" fill="#0ff" font-size="13.5" font-family='"Liberation Serif","Noto Serif CJK SC",serif' font-weight="bold" stroke="#0ff" stroke-width="0.45" textLength="53" lengthAdjust="spacingAndGlyphs">技术要求</text>
<text x="781" y="456" fill="#0ff" font-size="10" font-family='"Liberation Serif","Noto Serif CJK SC",serif' font-weight="bold" stroke="#0ff" stroke-width="0.45" textLength="186.8" lengthAdjust="spacingAndGlyphs">1. 定位面与底面的垂直度误差不大于0.06mm;</text>
<text x="781" y="468" fill="#0ff" font-size="10" font-family='"Liberation Serif","Noto Serif CJK SC",serif' font-weight="bold" stroke="#0ff" stroke-width="0.45" textLength="148.2" lengthAdjust="spacingAndGlyphs">2. 对刀块调试准确后，用锥销定位;</text>
<text x="781" y="480.7" fill="#0ff" font-size="10" font-family='"Liberation Serif","Noto Serif CJK SC",serif' font-weight="bold" stroke="#0ff" stroke-width="0.45" textLength="239.8" lengthAdjust="spacingAndGlyphs">3. 夹具在机床上安装时，定位块应与机床T型槽一侧靠紧;</text>
<text x="781" y="493.3" fill="#0ff" font-size="10" font-family='"Liberation Serif","Noto Serif CJK SC",serif' font-weight="bold" stroke="#0ff" stroke-width="0.45" textLength="125.3" lengthAdjust="spacingAndGlyphs">4. 塞尺用H=3mm的对刀平塞尺;</text>
<text x="781" y="505.3" fill="#0ff" font-size="10" font-family='"Liberation Serif","Noto Serif CJK SC",serif' font-weight="bold" stroke="#0ff" stroke-width="0.45" textLength="225.4" lengthAdjust="spacingAndGlyphs">5. 装配前应对零部件的主要尺寸及相关精度进行复查;</text>
<text x="781" y="517.4" fill="#0ff" font-size="10" font-family='"Liberation Serif","Noto Serif CJK SC",serif' font-weight="bold" stroke="#0ff" stroke-width="0.45" textLength="178.3" lengthAdjust="spacingAndGlyphs">6. 装配过程中不允许磕、碰、划伤和锈蚀。</text>
<path d="M812.5 585.5L1026.5 585.5" stroke="#f0f"/>
<path d="M812.5 596.5L1026.5 596.5" stroke="#f0f"/>
<path d="M812.5 606.5L1026.5 606.5" stroke="#f0f"/>
<path d="M812.5 616.5L1026.5 616.5" stroke="#f0f"/>
<path d="M812.5 627.5L1026.5 627.5" stroke="#f0f"/>
<path d="M812.5 637.5L1026.5 637.5" stroke="#f0f"/>
<path d="M812.5 648.5L1026.5 648.5" stroke="#f0f"/>
<path d="M812.5 658.5L1026.5 658.5" stroke="#f0f"/>
<path d="M812.5 669.5L1026.5 669.5" stroke="#f0f"/>
<path d="M812.5 585.5L812.5 679.5" stroke="#f0f"/>
<path d="M847.5 585.5L847.5 679.5" stroke="#f0f"/>
<path d="M907.5 585.5L907.5 679.5" stroke="#f0f"/>
<path d="M937.5 585.5L937.5 679.5" stroke="#f0f"/>
<path d="M967.5 585.5L967.5 679.5" stroke="#f0f"/>
<text x="831" y="591.5" fill="#f0f" font-size="5.5" font-family='"Liberation Sans","Noto Sans CJK SC",sans-serif' text-anchor="middle" stroke="#f0f" stroke-width="0.3">8</text>
<text x="848.5" y="593" fill="#f0f" font-size="9.5" font-family='"Liberation Serif","Noto Serif CJK SC",serif' font-weight="bold" stroke="#f0f" stroke-width="0.45" textLength="24.9" lengthAdjust="spacingAndGlyphs">对刀块</text>
<text x="942" y="593" fill="#f0f" font-size="9" font-family='"Liberation Serif","Noto Serif CJK SC",serif' font-weight="bold" stroke="#f0f" stroke-width="0.45" textLength="20" lengthAdjust="spacingAndGlyphs">T10A</text>
<text x="968.5" y="593" fill="#f0f" font-size="9" font-family='"Liberation Serif","Noto Serif CJK SC",serif' font-weight="bold" stroke="#f0f" stroke-width="0.45" textLength="38" lengthAdjust="spacingAndGlyphs">GB2264-80</text>
<text x="831" y="601.9" fill="#f0f" font-size="5.5" font-family='"Liberation Sans","Noto Sans CJK SC",sans-serif' text-anchor="middle" stroke="#f0f" stroke-width="0.3">7</text>
<text x="848.5" y="603.4" fill="#f0f" font-size="9.5" font-family='"Liberation Serif","Noto Serif CJK SC",serif' font-weight="bold" stroke="#f0f" stroke-width="0.45" textLength="58.5" lengthAdjust="spacingAndGlyphs">内六角圆柱头螺钉</text>
<text x="920" y="601.9" fill="#f0f" font-size="5.5" font-family='"Liberation Sans","Noto Sans CJK SC",sans-serif' text-anchor="middle" stroke="#f0f" stroke-width="0.3">2</text>
<text x="950" y="601.9" fill="#f0f" font-size="5" font-family='"Liberation Sans","Noto Sans CJK SC",sans-serif' text-anchor="middle" font-weight="bold" stroke="#f0f" stroke-width="0.45">45</text>
<text x="968.5" y="603.4" fill="#f0f" font-size="9" font-family='"Liberation Serif","Noto Serif CJK SC",serif' font-weight="bold" stroke="#f0f" stroke-width="0.45" textLength="55" lengthAdjust="spacingAndGlyphs">GB/T70.1-2000</text>
<text x="831" y="612.3" fill="#f0f" font-size="5.5" font-family='"Liberation Sans","Noto Sans CJK SC",sans-serif' text-anchor="middle" stroke="#f0f" stroke-width="0.3">6</text>
<text x="848.5" y="613.8" fill="#f0f" font-size="9.5" font-family='"Liberation Serif","Noto Serif CJK SC",serif' font-weight="bold" stroke="#f0f" stroke-width="0.45" textLength="8.3" lengthAdjust="spacingAndGlyphs">销</text>
<text x="920" y="612.3" fill="#f0f" font-size="5.5" font-family='"Liberation Sans","Noto Sans CJK SC",sans-serif' text-anchor="middle" stroke="#f0f" stroke-width="0.3">1</text>
<text x="950" y="612.3" fill="#f0f" font-size="5" font-family='"Liberation Sans","Noto Sans CJK SC",sans-serif' text-anchor="middle" font-weight="bold" stroke="#f0f" stroke-width="0.45">45</text>
<text x="968.5" y="613.8" fill="#f0f" font-size="9" font-family='"Liberation Serif","Noto Serif CJK SC",serif' font-weight="bold" stroke="#f0f" stroke-width="0.45" textLength="33" lengthAdjust="spacingAndGlyphs">HRC40~45</text>
<text x="831" y="622.8" fill="#f0f" font-size="5.5" font-family='"Liberation Sans","Noto Sans CJK SC",sans-serif' text-anchor="middle" stroke="#f0f" stroke-width="0.3">5</text>
<text x="848.5" y="624.3" fill="#f0f" font-size="9.5" font-family='"Liberation Serif","Noto Serif CJK SC",serif' font-weight="bold" stroke="#f0f" stroke-width="0.45" textLength="33.2" lengthAdjust="spacingAndGlyphs">星形把手</text>
<text x="920" y="622.8" fill="#f0f" font-size="5.5" font-family='"Liberation Sans","Noto Sans CJK SC",sans-serif' text-anchor="middle" stroke="#f0f" stroke-width="0.3">1</text>
<text x="950" y="624.3" fill="#f0f" font-size="5.5" font-family='"Liberation Sans","Noto Sans CJK SC",sans-serif' text-anchor="middle" stroke="#f0f" stroke-width="0.3">ZG310</text>
<text x="969" y="624.3" fill="#f0f" font-size="5.5" font-family='"Liberation Sans","Noto Sans CJK SC",sans-serif' stroke="#f0f" stroke-width="0.3" textLength="36" lengthAdjust="spacingAndGlyphs">GB2220-80</text>
<text x="831" y="633.2" fill="#f0f" font-size="5.5" font-family='"Liberation Sans","Noto Sans CJK SC",sans-serif' text-anchor="middle" stroke="#f0f" stroke-width="0.3">4</text>
<text x="848.5" y="634.7" fill="#f0f" font-size="9.5" font-family='"Liberation Serif","Noto Serif CJK SC",serif' font-weight="bold" stroke="#f0f" stroke-width="0.45" textLength="41.5" lengthAdjust="spacingAndGlyphs">活动V形块</text>
<text x="920" y="633.2" fill="#f0f" font-size="5.5" font-family='"Liberation Sans","Noto Sans CJK SC",sans-serif' text-anchor="middle" stroke="#f0f" stroke-width="0.3">1</text>
<text x="950" y="634.7" fill="#f0f" font-size="5.5" font-family='"Liberation Sans","Noto Sans CJK SC",sans-serif' text-anchor="middle" stroke="#f0f" stroke-width="0.3">T20</text>
<text x="968.5" y="634.7" fill="#f0f" font-size="9" font-family='"Liberation Serif","Noto Serif CJK SC",serif' font-weight="bold" stroke="#f0f" stroke-width="0.45" textLength="38" lengthAdjust="spacingAndGlyphs">GB2211-80</text>
<text x="831" y="643.6" fill="#f0f" font-size="5.5" font-family='"Liberation Sans","Noto Sans CJK SC",sans-serif' text-anchor="middle" stroke="#f0f" stroke-width="0.3">3</text>
<text x="848.5" y="645.1" fill="#f0f" font-size="9.5" font-family='"Liberation Serif","Noto Serif CJK SC",serif' font-weight="bold" stroke="#f0f" stroke-width="0.45" textLength="33.2" lengthAdjust="spacingAndGlyphs">固定支承</text>
<text x="920" y="643.6" fill="#f0f" font-size="5.5" font-family='"Liberation Sans","Noto Sans CJK SC",sans-serif' text-anchor="middle" stroke="#f0f" stroke-width="0.3">1</text>
<text x="950" y="643.6" fill="#f0f" font-size="5" font-family='"Liberation Sans","Noto Sans CJK SC",sans-serif' text-anchor="middle" font-weight="bold" stroke="#f0f" stroke-width="0.45">45</text>
<text x="831" y="654.1" fill="#f0f" font-size="5.5" font-family='"Liberation Sans","Noto Sans CJK SC",sans-serif' text-anchor="middle" stroke="#f0f" stroke-width="0.3">2</text>
<text x="848.5" y="655.6" fill="#f0f" font-size="9.5" font-family='"Liberation Serif","Noto Serif CJK SC",serif' font-weight="bold" stroke="#f0f" stroke-width="0.45" textLength="58.5" lengthAdjust="spacingAndGlyphs">内六角圆柱头螺钉</text>
<text x="920" y="654.1" fill="#f0f" font-size="5.5" font-family='"Liberation Sans","Noto Sans CJK SC",sans-serif' text-anchor="middle" stroke="#f0f" stroke-width="0.3">4</text>
<text x="950" y="654.1" fill="#f0f" font-size="5" font-family='"Liberation Sans","Noto Sans CJK SC",sans-serif' text-anchor="middle" font-weight="bold" stroke="#f0f" stroke-width="0.45">45</text>
<text x="968.5" y="655.6" fill="#f0f" font-size="9" font-family='"Liberation Serif","Noto Serif CJK SC",serif' font-weight="bold" stroke="#f0f" stroke-width="0.45" textLength="55" lengthAdjust="spacingAndGlyphs">GB/T70.1-2000</text>
<text x="831" y="664.5" fill="#f0f" font-size="5.5" font-family='"Liberation Sans","Noto Sans CJK SC",sans-serif' text-anchor="middle" stroke="#f0f" stroke-width="0.3">1</text>
<text x="848.5" y="666" fill="#f0f" font-size="9.5" font-family='"Liberation Serif","Noto Serif CJK SC",serif' font-weight="bold" stroke="#f0f" stroke-width="0.45" textLength="24.9" lengthAdjust="spacingAndGlyphs">夹具体</text>
<text x="920" y="664.5" fill="#f0f" font-size="5.5" font-family='"Liberation Sans","Noto Sans CJK SC",sans-serif' text-anchor="middle" stroke="#f0f" stroke-width="0.3">1</text>
<text x="942" y="666" fill="#f0f" font-size="9" font-family='"Liberation Serif","Noto Serif CJK SC",serif' font-weight="bold" stroke="#f0f" stroke-width="0.45" textLength="20" lengthAdjust="spacingAndGlyphs">HT150</text>
<text x="817" y="678.1" fill="#f0f" font-size="9" font-family='"Liberation Serif","Noto Serif CJK SC",serif' font-weight="bold" stroke="#f0f" stroke-width="0.45">序</text>
<text x="835" y="678.1" fill="#f0f" font-size="9" font-family='"Liberation Serif","Noto Serif CJK SC",serif' font-weight="bold" stroke="#f0f" stroke-width="0.45">号</text>
<text x="856" y="678.1" fill="#f0f" font-size="9" font-family='"Liberation Serif","Noto Serif CJK SC",serif' font-weight="bold" stroke="#f0f" stroke-width="0.45">名</text>
<text x="882" y="678.1" fill="#f0f" font-size="9" font-family='"Liberation Serif","Noto Serif CJK SC",serif' font-weight="bold" stroke="#f0f" stroke-width="0.45">称</text>
<text x="908.5" y="678.1" fill="#f0f" font-size="9" font-family='"Liberation Serif","Noto Serif CJK SC",serif' font-weight="bold" stroke="#f0f" stroke-width="0.45">件</text>
<text x="925" y="678.1" fill="#f0f" font-size="9" font-family='"Liberation Serif","Noto Serif CJK SC",serif' font-weight="bold" stroke="#f0f" stroke-width="0.45">数</text>
<text x="938.5" y="678.1" fill="#f0f" font-size="9" font-family='"Liberation Serif","Noto Serif CJK SC",serif' font-weight="bold" stroke="#f0f" stroke-width="0.45">材</text>
<text x="954" y="678.1" fill="#f0f" font-size="9" font-family='"Liberation Serif","Noto Serif CJK SC",serif' font-weight="bold" stroke="#f0f" stroke-width="0.45">料</text>
<text x="972" y="678.1" fill="#f0f" font-size="9" font-family='"Liberation Serif","Noto Serif CJK SC",serif' font-weight="bold" stroke="#f0f" stroke-width="0.45">备</text>
<text x="1005" y="678.1" fill="#f0f" font-size="9" font-family='"Liberation Serif","Noto Serif CJK SC",serif' font-weight="bold" stroke="#f0f" stroke-width="0.45">注</text>
<path d="M812.5 679.5L1026 679.5" stroke="#fff"/>
<path d="M812.5 679.5L812.5 746.5" stroke="#fff"/>
<path d="M824.5 679.5L824.5 712.5" stroke="#fff"/>
<path d="M836.5 679.5L836.5 712.5" stroke="#fff"/>
<path d="M855.5 679.5L855.5 712.5" stroke="#fff"/>
<path d="M874.5 679.5L874.5 712.5" stroke="#fff"/>
<path d="M888.5 679.5L888.5 712.5" stroke="#fff"/>
<path d="M907.5 679.5L907.5 746.5" stroke="#fff"/>
<path d="M967.5 679.5L967.5 746.5" stroke="#fff"/>
<path d="M812.5 712.5L907.5 712.5" stroke="#fff"/>
<path d="M812.5 721.5L907.5 721.5" stroke="#fff"/>
<path d="M812.5 729.5L907.5 729.5" stroke="#fff"/>
<path d="M812.5 738.5L907.5 738.5" stroke="#fff"/>
<path d="M826.5 712.5L826.5 746.5" stroke="#fff"/>
<path d="M840.5 712.5L840.5 746.5" stroke="#fff"/>
<path d="M860.5 712.5L860.5 746.5" stroke="#fff"/>
<path d="M874.5 712.5L874.5 746.5" stroke="#fff"/>
<path d="M888.5 712.5L888.5 746.5" stroke="#fff"/>
<path d="M907.5 712.5L967.5 712.5" stroke="#fff"/>
<path d="M907.5 723.5L967.5 723.5" stroke="#fff"/>
<path d="M907.5 734.5L967.5 734.5" stroke="#fff"/>
<path d="M938.5 712.5L938.5 734.5" stroke="#fff"/>
<path d="M953.5 712.5L953.5 734.5" stroke="#fff"/>
<path d="M915.5 723.8L915.5 734.5" stroke="#fff"/>
<path d="M923.5 723.8L923.5 734.5" stroke="#fff"/>
<path d="M930.5 723.8L930.5 734.5" stroke="#fff"/>
<path d="M967.5 699.5L1026 699.5" stroke="#fff"/>
<path d="M967.5 721.5L1026 721.5" stroke="#fff"/>
<path d="M967.5 733.5L1026 733.5" stroke="#fff"/>
<text x="813.5" y="710.5" fill="#fff" font-size="5.5" font-family='"Liberation Sans","Noto Sans CJK SC",sans-serif' stroke="#fff" stroke-width="0.25">标记</text>
<text x="825" y="710.5" fill="#fff" font-size="5.5" font-family='"Liberation Sans","Noto Sans CJK SC",sans-serif' stroke="#fff" stroke-width="0.25">处数</text>
<text x="839" y="710.5" fill="#fff" font-size="5.5" font-family='"Liberation Sans","Noto Sans CJK SC",sans-serif' stroke="#fff" stroke-width="0.25">分区</text>
<text x="856" y="711.5" fill="#fff" font-size="3.6" font-family='"Liberation Sans","Noto Sans CJK SC",sans-serif' stroke="#fff" stroke-width="0.25">更改文件号</text>
<text x="875" y="710.5" fill="#fff" font-size="5.5" font-family='"Liberation Sans","Noto Sans CJK SC",sans-serif' stroke="#fff" stroke-width="0.25">签名</text>
<text x="891" y="710.5" fill="#fff" font-size="5.5" font-family='"Liberation Sans","Noto Sans CJK SC",sans-serif' stroke="#fff" stroke-width="0.25">日期</text>
<text x="814" y="718" fill="#fff" font-size="5.5" font-family='"Liberation Sans","Noto Sans CJK SC",sans-serif' stroke="#fff" stroke-width="0.25">设计</text>
<text x="861.5" y="718" fill="#fff" font-size="4" font-family='"Liberation Sans","Noto Sans CJK SC",sans-serif' stroke="#fff" stroke-width="0.25">标准化</text>
<text x="814" y="735.2" fill="#fff" font-size="5.5" font-family='"Liberation Sans","Noto Sans CJK SC",sans-serif' stroke="#fff" stroke-width="0.25">审核</text>
<text x="814" y="744.5" fill="#fff" font-size="5.5" font-family='"Liberation Sans","Noto Sans CJK SC",sans-serif' stroke="#fff" stroke-width="0.25">工艺</text>
<text x="861.5" y="744.5" fill="#fff" font-size="5.5" font-family='"Liberation Sans","Noto Sans CJK SC",sans-serif' stroke="#fff" stroke-width="0.25">批准</text>
<text x="910" y="720.5" fill="#fff" font-size="5.5" font-family='"Liberation Sans","Noto Sans CJK SC",sans-serif' stroke="#fff" stroke-width="0.25" textLength="27" lengthAdjust="spacingAndGlyphs">阶段标记</text>
<text x="939.5" y="720.5" fill="#fff" font-size="5.5" font-family='"Liberation Sans","Noto Sans CJK SC",sans-serif' stroke="#fff" stroke-width="0.25">重量</text>
<text x="954.5" y="720.5" fill="#fff" font-size="5.5" font-family='"Liberation Sans","Noto Sans CJK SC",sans-serif' stroke="#fff" stroke-width="0.25">比例</text>
<text x="956" y="731.5" fill="#fff" font-size="5" font-family='"Liberation Sans","Noto Sans CJK SC",sans-serif' stroke="#fff" stroke-width="0.25">1:1</text>
<text x="928" y="744" fill="#fff" font-size="6" font-family='"Liberation Sans","Noto Sans CJK SC",sans-serif' stroke="#fff" stroke-width="0.25">共 1 张</text>
<text x="990" y="729" fill="#fff" font-size="5.5" font-family='"Liberation Sans","Noto Sans CJK SC",sans-serif' stroke="#fff" stroke-width="0.25">U.04</text>
<text x="971.5" y="716" fill="#f0f" font-size="12" font-family='"Liberation Serif","Noto Serif CJK SC",serif' font-weight="bold" stroke="#f0f" stroke-width="0.45" textLength="72" lengthAdjust="spacingAndGlyphs">铣右端面夹具</text>
</svg>
</body></html>
